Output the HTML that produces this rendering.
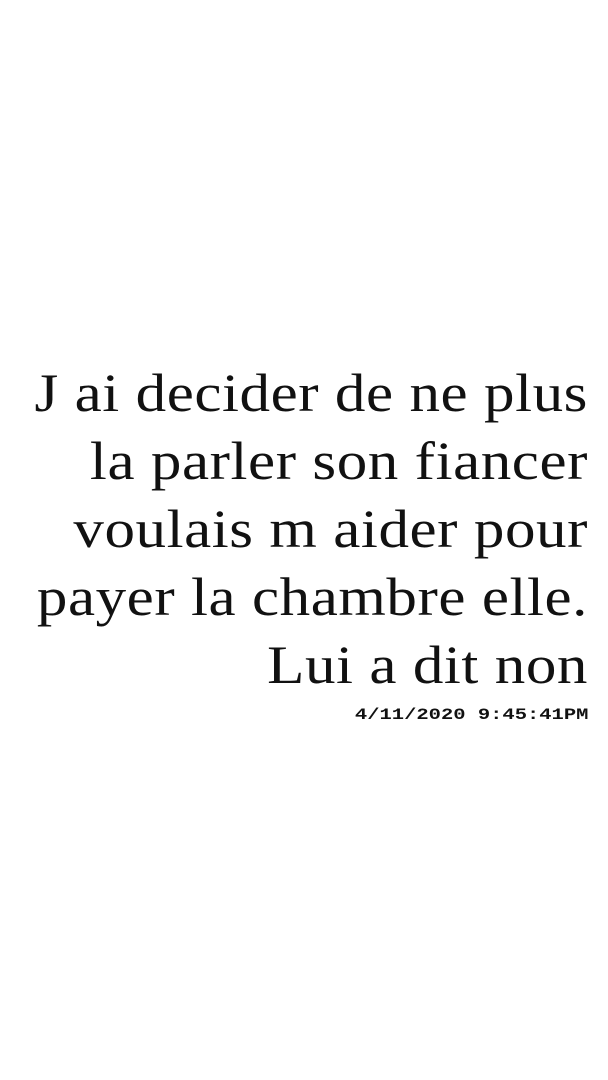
<!DOCTYPE html>
<html><head><style>
html,body{margin:0;padding:0;background:#fff;width:608px;height:1080px;overflow:hidden}
.t{position:absolute;top:359px;right:20px;width:600px;text-align:right;font-family:"Liberation Serif",serif;font-size:54px;line-height:68px;color:#111;letter-spacing:0.5px;transform:scaleX(1.13);transform-origin:right top;white-space:nowrap}
.d{position:absolute;top:706px;right:20px;font-family:"Liberation Mono",monospace;font-weight:bold;font-size:16px;color:#111;transform:scaleX(1.28);transform-origin:right top;white-space:nowrap}
</style></head><body>
<div class="t">J ai decider de ne plus<br>la parler son fiancer<br>voulais m aider pour<br>payer la chambre elle.<br>Lui a dit non</div>
<div class="d">4/11/2020 9:45:41PM</div>
</body></html>
